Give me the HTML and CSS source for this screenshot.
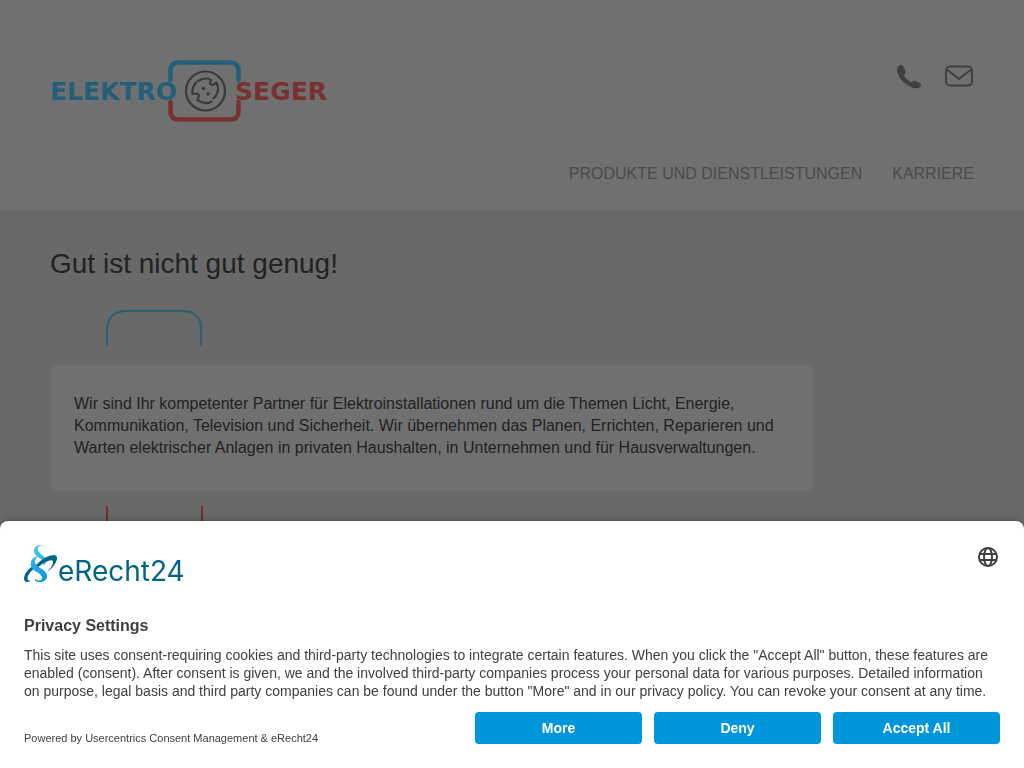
FILE: index.html
```html
<!DOCTYPE html>
<html lang="de">
<head>
<meta charset="utf-8">
<meta name="viewport" content="width=device-width, initial-scale=1">
<title>Elektro Seger</title>
<link rel="stylesheet" href="styles.css">
</head>
<body>
<header class="site-header">
  <div class="header-top">
    <a class="brand" href="#" aria-label="Elektro Seger">
      <svg width="278" height="64" viewBox="0 0 278 64">
        <g fill="none" stroke-width="4.500" stroke-linecap="round">
          <path class="stroke-blue" d="M120.500 21V12q0-8.500 8.500-8.500h51q8.500 0 8.500 8.500v9"/>
          <path class="stroke-red" d="M120.500 43v9q0 8.500 8.500 8.500h51q8.500 0 8.500-8.500v-9"/>
        </g>
        <g fill="none" stroke="#393939" stroke-width="2.200" stroke-linecap="round" stroke-linejoin="round">
          <circle cx="155.500" cy="32" r="19.500"/>
          <path d="M148 22q4-2.500 8-2.500 3 0 5 1.500l-1 3.500q2 3 4.500.5l2-1.500q2.500 5 1 10-1.500 4-4 6"/>
          <path d="M146 23.500q-4.500 6-3.500 11.500l4.500-.5q3 1 1.500 3.500l-1 3q7 5.500 14 1.500"/>
        </g>
        <circle cx="153.500" cy="29.500" r="1.700" fill="#393939"/><circle cx="158" cy="35" r="1.700" fill="#393939"/>
        <text class="wordmark blue" x="0" y="41">ELEKTRO</text>
        <text class="wordmark red" x="277" y="41" text-anchor="end">SEGER</text>
      </svg>
    </a>
    <div class="contact">
      <a href="#" aria-label="Telefon"><svg width="26" height="26" viewBox="0 0 26 26"><path fill="#404040" d="M5.500 2Q2 3 2 8q3 12 16 17 5 1 7-1 1.500-2 .5-3.500l-5-2.500q-2-.5-3 .5l-1.500 1Q11 16.500 8.500 12.500l1.500-1.500q1-1.500.5-3L8 3Q7 1.500 5.500 2z"/></svg></a>
      <a href="#" aria-label="E-Mail"><svg width="28" height="22" viewBox="0 0 28 22" fill="none" stroke="#404040" stroke-width="2" stroke-linejoin="round"><rect x="1" y="1.500" width="26" height="19" rx="4"/><path d="M2 4.500l12 9.500 12-9.500"/></svg></a>
    </div>
  </div>
  <nav class="main-nav">
    <a href="#">PRODUKTE UND DIENSTLEISTUNGEN</a>
    <a href="#">KARRIERE</a>
  </nav>
</header>
<main class="content">
  <h1>Gut ist nicht gut genug!</h1>
  <svg class="bracket" width="98" height="36" viewBox="0 0 98 36" fill="none"><path stroke="#2c5f73" stroke-width="2" d="M1 36V19Q2 2 19 1h59q17 1 17 18v17"/></svg>
  <section class="intro">
    <p>Wir sind Ihr kompetenter Partner für Elektroinstallationen rund um die Themen Licht, Energie, Kommunikation, Television und Sicherheit. Wir übernehmen das Planen, Errichten, Reparieren und Warten elektrischer Anlagen in privaten Haushalten, in Unternehmen und für Hausverwaltungen.</p>
  </section>
  <svg class="bracket" width="98" height="36" viewBox="0 0 98 36" fill="none"><path stroke="#702e2c" stroke-width="2" d="M1 0v17q1 17 18 18h60q17-1 17-18V0"/></svg>
</main>
<div class="consent" role="dialog" aria-labelledby="consent-title">
  <div class="consent-top">
    <svg width="164" height="46" viewBox="0 0 164 46" role="img" aria-label="eRecht24">
      <defs><linearGradient id="para" gradientUnits="userSpaceOnUse" x1="0" y1="0" x2="0" y2="37"><stop stop-color="#4cc9f5"/><stop offset="1" stop-color="#0593e0"/></linearGradient></defs>
      <path fill="#006487" d="M7 36Q0 39 0 33 1 26 9 21l2 2Q4 28 3.500 33q0 3 3.500 3z"/>
      <g fill="url(#para)">
        <path d="M22 3C19-1 10-1 10 6c0 4 5 6 8 9 2 2 2 4 1 6 5-4 3-8-1-11-3-3-5-4-4-7 1-3 5-3 8 0z"/>
        <path d="M13 11c-8 3-8 11-2 15 5 3 8 5 7 8-1 2-4 2-7 0v2c7 3 13-1 12-6-1-6-12-8-12-13 0-3 2-4 2-6z"/>
      </g>
      <path fill="#006487" d="M12 20Q22 10 30 10q5 1 2 7-3 6-9 10 7-7 6-11-3-3-15 6z"/>
      <text class="consent-brand" x="34" y="36">eRecht24</text>
    </svg>
    <button class="lang" type="button" aria-label="Select language">
      <svg width="24" height="24" viewBox="0 0 24 24" fill="none" stroke="#404040" stroke-width="2"><circle cx="12" cy="12" r="9"/><ellipse cx="12" cy="12" rx="4" ry="9"/><path d="M4 9h16M4 15h16"/></svg>
    </button>
  </div>
  <h2 id="consent-title">Privacy Settings</h2>
  <p class="consent-text">This site uses consent-requiring cookies and third-party technologies to integrate certain features. When you click the "Accept All" button, these features are enabled (consent). After consent is given, we and the involved third-party companies process your personal data for various purposes. Detailed information on purpose, legal basis and third party companies can be found under the button "More" and in our privacy policy. You can revoke your consent at any time.</p>
  <div class="consent-bottom">
    <small>Powered by Usercentrics Consent Management &amp; eRecht24</small>
    <div class="actions">
      <button type="button">More</button>
      <button type="button">Deny</button>
      <button type="button">Accept All</button>
    </div>
  </div>
</div>
</body>
</html>
```
FILE: styles.css
```css
* { box-sizing: border-box; }
html { height: 100%; overflow: hidden; }
body {
  margin: 0;
  min-height: 100%;
  background: #696969;
  color: #222;
  font: 16px/22px "Liberation Sans", Arial, sans-serif;
}
h1, h2, p { margin: 0; }
svg { display: block; }

.site-header { padding: 59px 50px 25px; background: #707070; }
.header-top { display: flex; justify-content: space-between; align-items: flex-start; }
.contact { display: flex; align-items: center; gap: 24px; padding: 4px 1px 0 0; }
.main-nav { display: flex; justify-content: flex-end; gap: 30px; padding-top: 40px; }
.main-nav a { color: #484b4c; text-decoration: none; }
.wordmark { font: bold 25px "DejaVu Sans", sans-serif; }
.blue { fill: #245f7a; }
.red { fill: #773230; }
.stroke-blue { stroke: #245f7a; }
.stroke-red { stroke: #773230; }

.content { padding: 36px 50px 0; }
h1 { font-size: 28px; font-weight: normal; line-height: 36px; }
.bracket { margin-left: 56px; }
h1 + .bracket { margin-top: 28px; }
.intro {
  max-width: 764px;
  margin: 19px 0 15px;
  padding: 28px 24px 32px;
  background: #707070;
}

.consent {
  position: fixed;
  inset: auto 0 0;
  padding: 24px;
  border-radius: 8px 8px 0 0;
  background: #fff;
  color: #404040;
  box-shadow: 0 0 8px rgba(0, 0, 0, 0.3);
}
.consent-top { display: flex; justify-content: space-between; align-items: flex-start; }
.consent-brand { font: 28px Inter, sans-serif; fill: #006487; }
.lang { padding: 0; border: 0; background: none; }
h2 { padding-top: 25px; font-size: 16px; line-height: 20px; }
.consent-text { padding-top: 10px; font-size: 14px; line-height: 18px; }
.consent-bottom { display: flex; align-items: flex-end; justify-content: space-between; padding-top: 12px; }
.consent-bottom small { font-size: 11px; line-height: 12px; }
.actions { display: grid; grid-template-columns: repeat(3, 1fr); flex: 0 1 525px; gap: 12px; }
.actions button {
  height: 32px;
  padding: 0;
  border: 0;
  border-radius: 4px;
  background: #0096dc;
  color: #fff;
  font: bold 14px "Liberation Sans", Arial, sans-serif;
}
```
